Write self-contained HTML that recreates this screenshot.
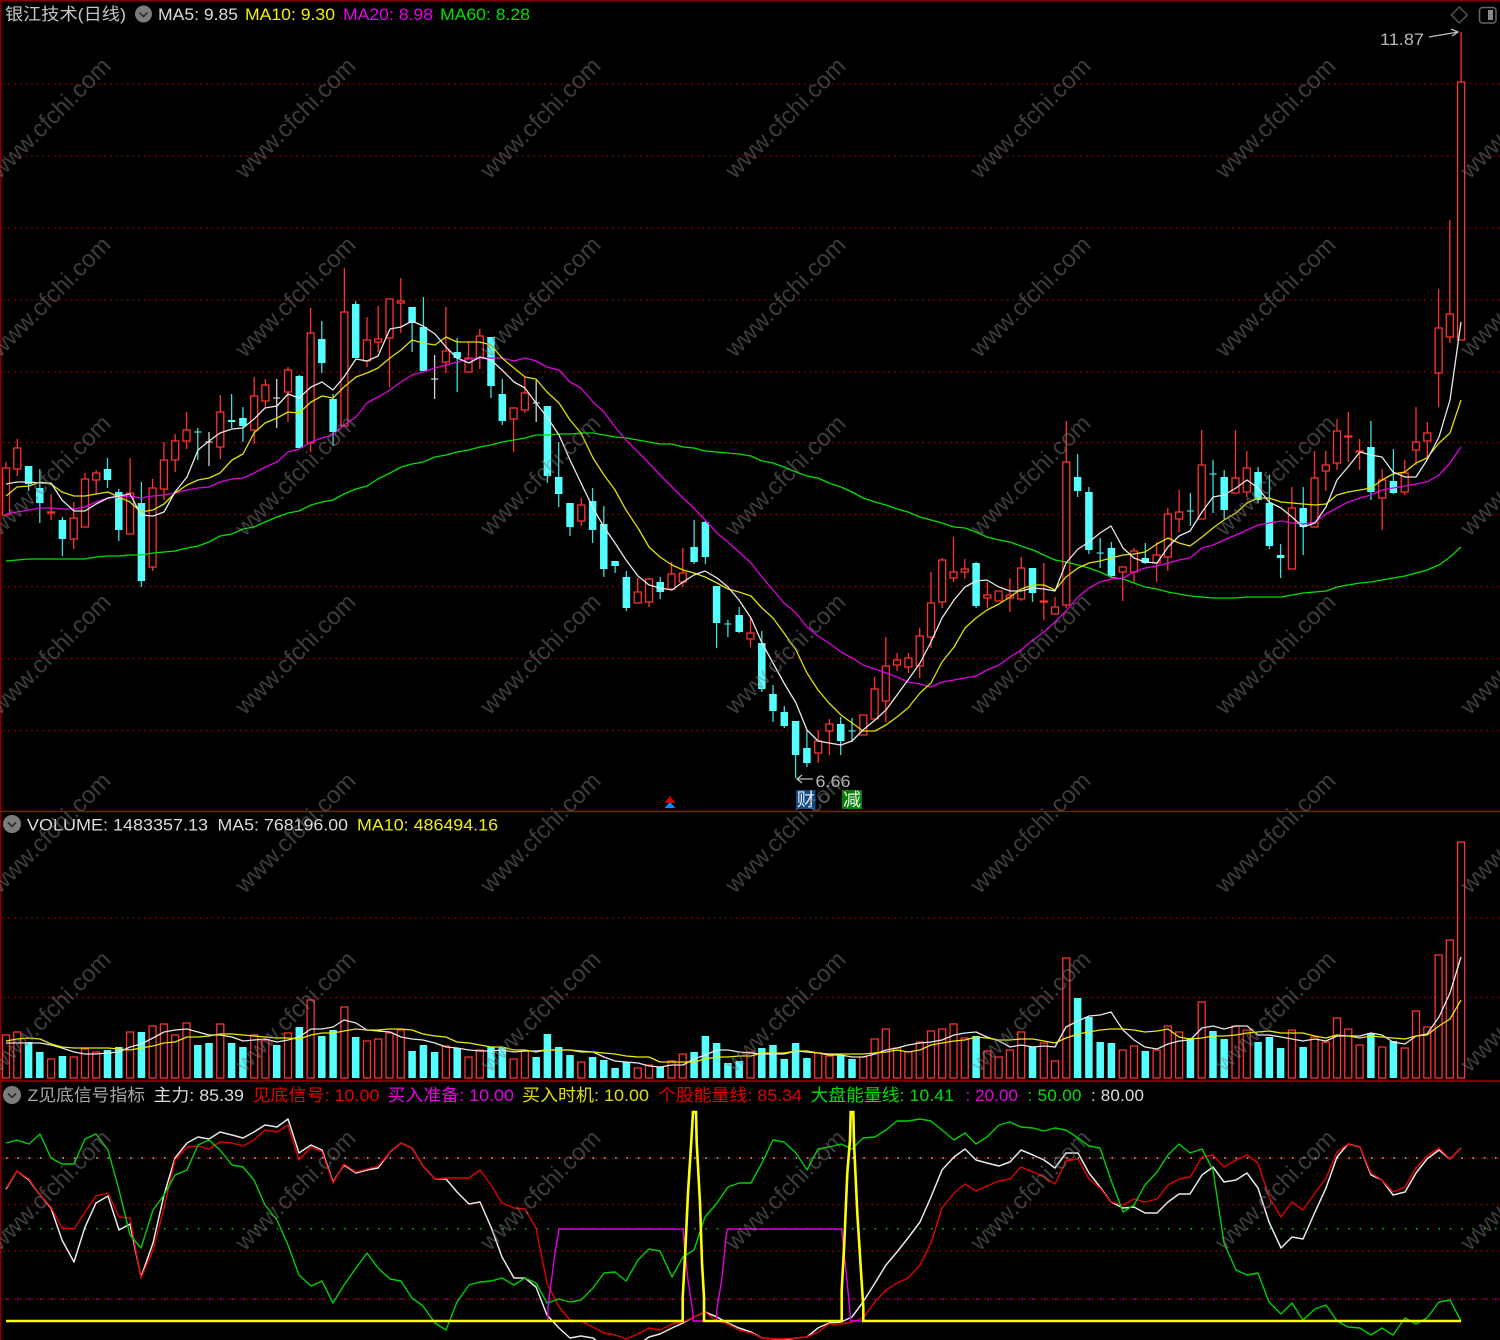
<!DOCTYPE html>
<html lang="zh"><head><meta charset="utf-8"><title>银江技术(日线)</title>
<style>
html,body{margin:0;padding:0;background:#000;width:1500px;height:1340px;overflow:hidden}
svg{display:block}
text{font-family:"Liberation Sans","Noto Sans CJK SC",sans-serif;font-size:17px}
.l{fill:none;stroke-width:1.3;stroke-linejoin:round}
.w{font-size:24px;fill:#7f7f7f;opacity:.48;text-anchor:middle}
.g{fill:none;stroke:#8c0000;stroke-width:1.5;stroke-dasharray:1.6 4.04}
</style></head><body>
<svg width="1500" height="1340" viewBox="0 0 1500 1340" xmlns="http://www.w3.org/2000/svg">
<rect width="1500" height="1340" fill="#000"/>
<!-- grid -->
<path class="g" d="M3 84H1500M3 156H1500M3 228H1500M3 300H1500M3 372H1500M3 442.5H1500M3 514.5H1500M3 586.5H1500M3 658.5H1500M3 730.5H1500M3 918H1500M3 997.5H1500M3 1158H1500M3 1204.5H1500M3 1251H1500M3 1299H1500"/>
<path d="M6 1158H1500" fill="none" stroke="#bdbdbd" stroke-width="1.5" stroke-dasharray="1.6 9.68"/>
<path d="M6 1228.7H1500" fill="none" stroke="#00c800" stroke-width="1.5" stroke-dasharray="1.6 9.68"/>
<path d="M6 1299H1500" fill="none" stroke="#c000c0" stroke-width="1.5" stroke-dasharray="1.6 9.68"/>
<!-- borders -->
<path d="M0 .7H1500M.7 0V1340" fill="none" stroke="#8a0000" stroke-width="1.5"/>
<path d="M0 811.5H1500M0 1081H1500" fill="none" stroke="#a00000" stroke-width="1.5"/>
<!-- candles -->
<path fill="none" stroke="#ff3232" stroke-width="1.3" d="M6 462V515M17.3 439V476M51.1 494V520M73.7 502V549M85 473V527M96.2 470V494M130.1 458V534M152.6 479V571M163.9 442V500M175.2 434V472M186.5 412V449M220.3 395V459M254.2 377V444M265.4 379V408M288 367V422M310.6 308V452M344.4 268V426M367 317V367M378.2 306V352M389.5 299V387M400.8 278V333M445.9 307V373M468.5 342V372M479.8 329V369M513.6 408V452M524.9 377V413M581.3 498V526M637.7 578V603M649 578V607M671.5 562V589M682.8 548V587M750.5 617V647M818.2 730V763M829.4 719V755M863.3 715V735M874.6 677V719M885.8 637V722M897.1 653V671M908.4 653V673M919.7 628V678M931 572V648M942.2 558V608M953.5 537V582M964.8 559V579M987.4 582V608M998.6 591V601M1009.9 578V612M1021.2 557V601M1043.8 563V620M1055 597V614M1066.3 421V608M1122.7 566V601M1134 548V582M1156.6 542V582M1167.8 508V571M1179.1 490V532M1201.7 430V519M1235.5 430V493M1246.8 451V497M1291.9 487V569M1314.5 451V527M1325.8 451V491M1337 419V470M1348.3 412V462M1359.6 439V470M1382.2 469V530M1404.7 460V495M1416 407V465M1427.3 422V460M1438.6 289V407M1449.8 220V343M1461.1 32V340"/>
<path fill="#000" stroke="#ff3232" stroke-width="1.3" d="M2.5 468h7v47h-7zM13.8 448h7v21h-7zM47.6 512h7v1h-7zM70.2 518h7v21h-7zM81.5 479h7v48h-7zM92.7 473h7v7h-7zM126.6 493h7v41h-7zM149.1 488h7v79h-7zM160.4 460h7v29h-7zM171.7 441h7v19h-7zM183 430h7v11h-7zM216.8 412h7v35h-7zM250.7 396h7v34h-7zM261.9 385h7v16h-7zM284.5 370h7v22h-7zM307.1 333h7v110h-7zM340.9 312h7v114h-7zM363.5 340h7v21h-7zM374.7 339h7v3h-7zM386 299h7v39h-7zM397.3 301h7v2h-7zM442.4 351h7v11h-7zM465 358h7v14h-7zM476.3 336h7v22h-7zM510.1 408h7v11h-7zM521.4 393h7v17h-7zM577.8 505h7v16h-7zM634.2 592h7v11h-7zM645.5 579h7v23h-7zM668 574h7v15h-7zM679.3 573h7v9h-7zM747 633h7v6h-7zM814.7 741h7v12h-7zM825.9 724h7v7h-7zM859.8 715h7v20h-7zM871.1 689h7v30h-7zM882.3 666h7v35h-7zM893.6 660h7v5h-7zM904.9 658h7v9h-7zM916.2 636h7v30h-7zM927.5 603h7v34h-7zM938.7 560h7v42h-7zM950 572h7v6h-7zM961.3 569h7v3h-7zM983.9 595h7v3h-7zM995.1 591h7v10h-7zM1006.4 595h7v3h-7zM1017.7 568h7v31h-7zM1040.3 601h7v1h-7zM1051.5 607h7v7h-7zM1062.8 462h7v143h-7zM1119.2 567h7v5h-7zM1130.5 551h7v21h-7zM1153.1 555h7v8h-7zM1164.3 514h7v43h-7zM1175.6 512h7v7h-7zM1198.2 465h7v54h-7zM1232 478h7v15h-7zM1243.3 468h7v24h-7zM1288.4 508h7v61h-7zM1311 478h7v49h-7zM1322.3 465h7v6h-7zM1333.5 431h7v32h-7zM1344.8 436h7v1h-7zM1356.1 451h7v1h-7zM1378.7 480h7v18h-7zM1401.2 473h7v19h-7zM1412.5 442h7v8h-7zM1423.8 433h7v8h-7zM1435.1 328h7v45h-7zM1446.3 314h7v23h-7zM1457.6 82h7v258h-7z"/>
<path fill="none" stroke="#40dcdc" stroke-width="1.3" d="M28.6 466V491M39.8 469V523M62.4 517V556M107.5 458V488M118.8 489V541M141.4 482V587M197.8 428V460M231.6 394V428M242.9 407V442M299.3 375V448M321.8 321V373M333.1 394V446M355.7 301V358M412.1 307V352M423.4 297V371M457.2 338V392M491 337V398M502.3 379V425M547.4 406V483M558.7 442V507M570 503V536M592.6 488V543M603.8 506V577M615.1 561V573M626.4 571V611M660.2 577V599M694.1 520V564M705.4 520V564M716.6 586V648M727.9 620V637M739.2 607V633M761.8 631V692M773 685V722M784.3 706V728M795.6 721V778M806.9 730V767M840.7 717V755M852 718V742M976.1 562V608M1032.5 568V602M1077.6 454V497M1088.9 487V554M1100.2 538V568M1111.4 542V578M1145.3 543V564M1190.4 493V526M1213 460V513M1224.2 470V519M1258.1 467V503M1269.4 475V549M1280.6 544V578M1303.2 487V555M1370.9 421V500M1393.4 449V494M194.3 432h7M724.4 624h7M848.5 731h7M1096.7 553h7M1186.9 511h7M1209.5 474h7"/>
<path fill="none" stroke="#54ffff" stroke-width="7.5" d="M28.6 466V484M39.8 488V503M62.4 520V539M107.5 469V480M118.8 492V530M141.4 503V581M231.6 420V422M242.9 418V426M299.3 376V448M321.8 339V363M333.1 399V432M355.7 304V358M412.1 307V323M423.4 327V371M457.2 352V358M491 337V386M502.3 394V421M547.4 406V476M558.7 477V494M570 503V527M592.6 501V530M603.8 524V569M615.1 561V566M626.4 577V608M660.2 582V592M694.1 547V562M705.4 522V557M716.6 586V623M739.2 615V632M761.8 643V689M773 694V711M784.3 712V726M795.6 721V755M806.9 748V763M840.7 724V741M976.1 563V606M1032.5 568V593M1077.6 477V491M1088.9 492V550M1111.4 548V576M1145.3 558V563M1224.2 477V510M1258.1 472V500M1269.4 503V546M1280.6 555V558M1303.2 508V527M1370.9 447V492M1393.4 481V493"/>
<path fill="none" stroke="#d0d0d0" stroke-width="1.3" d="M209 432V466M205.5 442h7M276.7 379V428M273.2 398h7M434.6 355V399M431.1 379h7M536.2 380V422M532.7 403h7"/>
<!-- price MAs -->
<polyline class="l" stroke="#00e000" points="6,561 17,560 29,559 40,559 51,559 62,559 74,559 85,559 96,557 108,556 119,556 130,555 141,555 153,553 164,552 175,551 187,548 198,546 209,542 220,536 232,534 243,529 254,527 265,522 277,517 288,513 299,511 311,505 322,502 333,500 344,494 356,489 367,486 378,479 390,473 401,467 412,464 423,462 435,457 446,455 457,452 469,450 480,447 491,445 502,442 514,440 525,438 536,435 547,435 559,434 570,434 581,433 593,433 604,435 615,437 626,438 638,440 649,442 660,444 672,444 683,447 694,448 705,451 717,452 728,453 739,454 751,456 762,461 773,463 784,467 796,472 807,476 818,478 829,483 841,487 852,492 863,498 875,502 886,505 897,509 908,512 920,517 931,520 942,523 954,527 965,528 976,532 987,537 999,540 1010,542 1021,546 1033,550 1044,555 1055,560 1066,562 1078,565 1089,568 1100,572 1111,577 1123,579 1134,583 1145,587 1157,589 1168,592 1179,594 1190,596 1202,597 1213,598 1224,598 1236,598 1247,597 1258,597 1269,597 1281,597 1292,595 1303,593 1315,592 1326,591 1337,587 1348,585 1360,583 1371,582 1382,580 1393,578 1405,576 1416,573 1427,570 1439,565 1450,557 1461,547"/>
<polyline class="l" stroke="#e000e0" points="6,514 17,512 29,510 40,508 51,508 62,509 74,509 85,507 96,502 108,498 119,497 130,496 141,498 153,496 164,495 175,493 187,490 198,488 209,487 220,482 232,479 243,478 254,473 265,467 277,462 288,452 299,449 311,442 322,438 333,435 344,425 356,417 367,403 378,397 390,390 401,382 412,375 423,372 435,368 446,365 457,362 469,359 480,358 491,358 502,358 514,361 525,358 536,361 547,367 559,370 570,382 581,388 593,402 604,412 615,427 626,440 638,452 649,463 660,475 672,487 683,498 694,508 705,520 717,533 728,542 739,552 751,563 762,577 773,590 784,603 796,613 807,627 818,636 829,643 841,652 852,658 863,665 875,669 886,673 897,677 908,682 920,684 931,687 942,682 954,680 965,678 976,676 987,670 999,665 1010,657 1021,650 1033,640 1044,632 1055,622 1066,611 1078,597 1089,588 1100,582 1111,579 1123,578 1134,572 1145,568 1157,566 1168,563 1179,560 1190,558 1202,548 1213,545 1224,540 1236,535 1247,530 1258,525 1269,523 1281,521 1292,523 1303,524 1315,522 1326,514 1337,508 1348,502 1360,498 1371,495 1382,490 1393,488 1405,486 1416,484 1427,482 1439,475 1450,463 1461,447"/>
<polyline class="l" stroke="#e0e000" points="6,496 17,487 29,486 40,482 51,484 62,492 74,496 85,496 96,494 108,492 119,497 130,502 141,512 153,510 164,504 175,493 187,485 198,480 209,478 220,473 232,460 243,454 254,433 265,423 277,418 288,412 299,413 311,402 322,396 333,398 344,387 356,377 367,373 378,368 390,358 401,350 412,340 423,343 435,345 446,337 457,342 469,342 480,342 491,345 502,358 514,368 525,377 536,379 547,392 559,403 570,420 581,433 593,458 604,475 615,490 626,510 638,528 649,547 660,557 672,565 683,570 694,573 705,577 717,583 728,589 739,592 751,596 762,608 773,618 784,633 796,650 807,673 818,690 829,703 841,715 852,723 863,731 875,731 886,725 897,717 908,708 920,693 931,683 942,662 954,647 965,628 976,618 987,610 999,604 1010,597 1021,589 1033,585 1044,585 1055,590 1066,577 1078,568 1089,563 1100,561 1111,558 1123,555 1134,554 1145,552 1157,544 1168,538 1179,543 1190,546 1202,537 1213,528 1224,520 1236,513 1247,503 1258,498 1269,498 1281,502 1292,503 1303,504 1315,505 1326,504 1337,495 1348,492 1360,490 1371,488 1382,480 1393,474 1405,472 1416,463 1427,458 1439,443 1450,433 1461,400"/>
<polyline class="l" stroke="#e8e8e8" points="6,484 17,482 29,482 40,483 51,483 62,500 74,511 85,511 96,504 108,498 119,496 130,494 141,515 153,516 164,512 175,492 187,477 198,450 209,441 220,433 232,429 243,428 254,419 265,408 277,406 288,394 299,398 311,387 322,382 333,390 344,377 356,359 367,361 378,356 390,329 401,327 412,321 423,326 435,334 446,347 457,358 469,363 480,357 491,360 502,370 514,382 525,388 536,403 547,417 559,435 570,460 581,483 593,508 604,527 615,543 626,560 638,576 649,585 660,588 672,590 683,582 694,575 705,571 717,578 728,587 739,600 751,618 762,643 773,663 784,683 796,703 807,730 818,741 829,743 841,745 852,741 863,730 875,720 886,710 897,695 908,680 920,663 931,642 942,618 954,600 965,587 976,581 987,580 999,587 1010,591 1021,591 1033,588 1044,589 1055,591 1066,563 1078,549 1089,542 1100,533 1111,526 1123,548 1134,558 1145,562 1157,563 1168,547 1179,536 1190,531 1202,512 1213,497 1224,495 1236,488 1247,480 1258,488 1269,502 1281,508 1292,517 1303,527 1315,523 1326,507 1337,480 1348,467 1360,452 1371,455 1382,457 1393,472 1405,477 1416,477 1427,460 1439,437 1450,400 1461,322"/>
<!-- volume -->
<path fill="none" stroke="#ff3232" stroke-width="1.3" d="M2.5 1035h7V1078h-7zM13.8 1032h7V1078h-7zM47.6 1059h7V1078h-7zM70.2 1057h7V1078h-7zM81.5 1049h7V1078h-7zM92.7 1052h7V1078h-7zM126.6 1032h7V1078h-7zM149.1 1026h7V1078h-7zM160.4 1024h7V1078h-7zM171.7 1035h7V1078h-7zM183 1023h7V1078h-7zM216.8 1024h7V1078h-7zM250.7 1035h7V1078h-7zM261.9 1040h7V1078h-7zM284.5 1033h7V1078h-7zM307.1 1000h7V1078h-7zM340.9 1007h7V1078h-7zM363.5 1041h7V1078h-7zM374.7 1039h7V1078h-7zM386 1033h7V1078h-7zM397.3 1030h7V1078h-7zM442.4 1046h7V1078h-7zM465 1057h7V1078h-7zM476.3 1050h7V1078h-7zM510.1 1059h7V1078h-7zM521.4 1051h7V1078h-7zM577.8 1062h7V1078h-7zM634.2 1068h7V1078h-7zM645.5 1065h7V1078h-7zM668 1061h7V1078h-7zM679.3 1054h7V1078h-7zM747 1052h7V1078h-7zM814.7 1053h7V1078h-7zM825.9 1056h7V1078h-7zM859.8 1057h7V1078h-7zM871.1 1039h7V1078h-7zM882.3 1029h7V1078h-7zM893.6 1048h7V1078h-7zM904.9 1052h7V1078h-7zM916.2 1042h7V1078h-7zM927.5 1031h7V1078h-7zM938.7 1029h7V1078h-7zM950 1024h7V1078h-7zM961.3 1038h7V1078h-7zM983.9 1051h7V1078h-7zM995.1 1057h7V1078h-7zM1006.4 1050h7V1078h-7zM1017.7 1032h7V1078h-7zM1040.3 1043h7V1078h-7zM1051.5 1061h7V1078h-7zM1062.8 958h7V1078h-7zM1119.2 1050h7V1078h-7zM1130.5 1046h7V1078h-7zM1153.1 1050h7V1078h-7zM1164.3 1026h7V1078h-7zM1175.6 1032h7V1078h-7zM1198.2 1002h7V1078h-7zM1232 1026h7V1078h-7zM1243.3 1030h7V1078h-7zM1288.4 1030h7V1078h-7zM1311 1037h7V1078h-7zM1322.3 1042h7V1078h-7zM1333.5 1018h7V1078h-7zM1344.8 1029h7V1078h-7zM1356.1 1045h7V1078h-7zM1378.7 1047h7V1078h-7zM1401.2 1048h7V1078h-7zM1412.5 1011h7V1078h-7zM1423.8 1027h7V1078h-7zM1435.1 955h7V1078h-7zM1446.3 940h7V1078h-7zM1457.6 842h7V1078h-7z"/>
<path fill="none" stroke="#54ffff" stroke-width="7.5" d="M28.6 1042V1078M39.8 1052V1078M62.4 1056V1078M107.5 1050V1078M118.8 1047V1078M141.4 1032V1078M197.8 1045V1078M209 1043V1078M231.6 1043V1078M242.9 1047V1078M276.7 1045V1078M299.3 1027V1078M321.8 1036V1078M333.1 1030V1078M355.7 1037V1078M412.1 1051V1078M423.4 1045V1078M434.6 1052V1078M457.2 1048V1078M491 1047V1078M502.3 1047V1078M536.2 1057V1078M547.4 1034V1078M558.7 1047V1078M570 1055V1078M592.6 1057V1078M603.8 1060V1078M615.1 1068V1078M626.4 1062V1078M660.2 1067V1078M694.1 1052V1078M705.4 1036V1078M716.6 1043V1078M727.9 1063V1078M739.2 1061V1078M761.8 1048V1078M773 1045V1078M784.3 1059V1078M795.6 1043V1078M806.9 1058V1078M840.7 1055V1078M852 1059V1078M976.1 1036V1078M1032.5 1047V1078M1077.6 998V1078M1088.9 1017V1078M1100.2 1042V1078M1111.4 1043V1078M1145.3 1051V1078M1190.4 1038V1078M1213 1031V1078M1224.2 1039V1078M1258.1 1042V1078M1269.4 1037V1078M1280.6 1048V1078M1303.2 1047V1078M1370.9 1033V1078M1393.4 1041V1078"/>
<polyline class="l" stroke="#e8e8e8" points="6,1043 17,1043 29,1043 40,1043 51,1045 62,1048 74,1052 85,1054 96,1054 108,1053 119,1052 130,1047 141,1044 153,1038 164,1032 175,1030 187,1029 198,1032 209,1035 220,1035 232,1037 243,1041 254,1040 265,1039 277,1042 288,1040 299,1037 311,1029 322,1029 333,1027 344,1020 356,1023 367,1030 378,1031 390,1032 401,1037 412,1039 423,1040 435,1043 446,1047 457,1048 469,1050 480,1051 491,1051 502,1050 514,1052 525,1051 536,1051 547,1050 559,1050 570,1050 581,1051 593,1052 604,1057 615,1061 626,1062 638,1063 649,1066 660,1067 672,1065 683,1065 694,1059 705,1055 717,1050 728,1050 739,1052 751,1053 762,1054 773,1054 784,1054 796,1051 807,1052 818,1053 829,1055 841,1055 852,1057 863,1057 875,1054 886,1050 897,1048 908,1045 920,1043 931,1042 942,1040 954,1035 965,1033 976,1032 987,1037 999,1041 1010,1047 1021,1045 1033,1047 1044,1046 1055,1047 1066,1027 1078,1021 1089,1016 1100,1015 1111,1012 1123,1030 1134,1040 1145,1047 1157,1049 1168,1044 1179,1041 1190,1040 1202,1028 1213,1026 1224,1029 1236,1026 1247,1026 1258,1035 1269,1035 1281,1037 1292,1039 1303,1041 1315,1039 1326,1041 1337,1036 1348,1036 1360,1036 1371,1033 1382,1035 1393,1042 1405,1044 1416,1036 1427,1034 1439,1017 1450,993 1461,957"/>
<polyline class="l" stroke="#eaea00" points="6,1041 17,1039 29,1038 40,1039 51,1044 62,1047 74,1048 85,1048 96,1048 108,1048 119,1049 130,1050 141,1048 153,1046 164,1043 175,1042 187,1037 198,1037 209,1036 220,1034 232,1034 243,1035 254,1036 265,1037 277,1038 288,1038 299,1039 311,1035 322,1033 333,1033 344,1031 356,1029 367,1030 378,1030 390,1029 401,1029 412,1030 423,1034 435,1036 446,1037 457,1042 469,1043 480,1045 491,1047 502,1047 514,1050 525,1050 536,1052 547,1050 559,1050 570,1050 581,1052 593,1052 604,1053 615,1054 626,1056 638,1057 649,1057 660,1062 672,1062 683,1062 694,1062 705,1059 717,1057 728,1057 739,1056 751,1056 762,1053 773,1053 784,1053 796,1051 807,1051 818,1053 829,1054 841,1054 852,1054 863,1054 875,1053 886,1052 897,1050 908,1052 920,1050 931,1045 942,1043 954,1041 965,1040 976,1037 987,1038 999,1040 1010,1040 1021,1039 1033,1039 1044,1041 1055,1043 1066,1038 1078,1034 1089,1032 1100,1030 1111,1029 1123,1029 1134,1030 1145,1032 1157,1031 1168,1029 1179,1037 1190,1039 1202,1038 1213,1036 1224,1036 1236,1035 1247,1033 1258,1032 1269,1031 1281,1033 1292,1033 1303,1033 1315,1036 1326,1038 1337,1035 1348,1036 1360,1038 1371,1036 1382,1037 1393,1038 1405,1039 1416,1036 1427,1035 1439,1026 1450,1019 1461,1000"/>
<!-- indicator -->
<polyline fill="none" stroke="#e8e8e8" stroke-width="1.5" stroke-linejoin="round" points="6,1189 17,1171 29,1180 40,1195 51,1208 62,1240 74,1262 85,1227 96,1203 108,1196 119,1230 130,1224 141,1277 153,1243 164,1195 175,1158 187,1143 198,1137 209,1139 220,1132 232,1135 243,1138 254,1132 265,1125 277,1127 288,1119 299,1153 311,1145 322,1150 333,1182 344,1165 356,1173 367,1170 378,1168 390,1152 401,1143 412,1148 423,1166 435,1179 446,1179 457,1192 469,1204 480,1202 491,1227 502,1257 514,1278 525,1278 536,1287 547,1315 559,1328 570,1338 581,1336 593,1338 604,1347 615,1347 626,1347 638,1345 649,1337 660,1334 672,1328 683,1323 694,1317 705,1312 717,1317 728,1323 739,1328 751,1332 762,1338 773,1339 784,1340 796,1338 807,1337 818,1328 829,1323 841,1322 852,1317 863,1302 875,1283 886,1265 897,1252 908,1238 920,1222 931,1197 942,1170 954,1157 965,1149 976,1160 987,1163 999,1166 1010,1162 1021,1150 1033,1155 1044,1160 1055,1168 1066,1153 1078,1153 1089,1173 1100,1187 1111,1202 1123,1208 1134,1207 1145,1213 1157,1213 1168,1202 1179,1194 1190,1194 1202,1175 1213,1167 1224,1182 1236,1180 1247,1173 1258,1188 1269,1222 1281,1248 1292,1237 1303,1239 1315,1212 1326,1188 1337,1157 1348,1144 1360,1147 1371,1175 1382,1180 1393,1195 1405,1192 1416,1173 1427,1159 1439,1150 1450,1159 1461,1148"/>
<polyline fill="none" stroke="#e00000" stroke-width="1.4" stroke-linejoin="round" points="6,1188 17,1171 29,1179 40,1195 51,1207 62,1228 74,1229 85,1212 96,1196 108,1193 119,1217 130,1218 141,1278 153,1250 164,1208 175,1160 187,1147 198,1146 209,1149 220,1142 232,1143 243,1146 254,1140 265,1130 277,1132 288,1125 299,1160 311,1147 322,1152 333,1183 344,1164 356,1172 367,1169 378,1166 390,1152 401,1143 412,1148 423,1166 435,1179 446,1178 457,1178 469,1178 480,1170 491,1185 502,1203 514,1208 525,1209 536,1228 547,1283 559,1307 570,1320 581,1321 593,1327 604,1333 615,1335 626,1339 638,1334 649,1328 660,1330 672,1324 683,1322 694,1317 705,1312 717,1321 728,1324 739,1330 751,1333 762,1338 773,1339 784,1339 796,1338 807,1337 818,1332 829,1324 841,1324 852,1322 863,1318 875,1302 886,1290 897,1283 908,1278 920,1265 931,1243 942,1208 954,1193 965,1184 976,1191 987,1186 999,1181 1010,1179 1021,1167 1033,1172 1044,1177 1055,1184 1066,1161 1078,1159 1089,1179 1100,1188 1111,1202 1123,1205 1134,1199 1145,1202 1157,1199 1168,1185 1179,1179 1190,1177 1202,1157 1213,1155 1224,1167 1236,1160 1247,1155 1258,1163 1269,1197 1281,1217 1292,1202 1303,1210 1315,1193 1326,1178 1337,1152 1348,1144 1360,1147 1371,1173 1382,1180 1393,1192 1405,1187 1416,1168 1427,1156 1439,1148 1450,1159 1461,1148"/>
<polyline fill="none" stroke="#00d000" stroke-width="1.4" stroke-linejoin="round" points="6,1143 17,1140 29,1144 40,1134 51,1158 62,1164 74,1164 85,1139 96,1134 108,1150 119,1190 130,1235 141,1248 153,1210 164,1195 175,1175 187,1170 198,1145 209,1140 220,1150 232,1165 243,1167 254,1180 265,1205 277,1220 288,1245 299,1275 311,1286 322,1281 333,1303 344,1285 356,1268 367,1253 378,1268 390,1279 401,1281 412,1298 423,1306 435,1323 446,1330 457,1302 469,1285 480,1282 491,1281 502,1278 514,1285 525,1278 536,1283 547,1303 559,1299 570,1302 581,1300 593,1288 604,1273 615,1272 626,1281 638,1260 649,1249 660,1251 672,1277 683,1257 694,1250 705,1217 717,1203 728,1187 739,1183 751,1183 762,1163 773,1140 784,1142 796,1153 807,1170 818,1149 829,1147 841,1144 852,1149 863,1138 875,1137 886,1130 897,1121 908,1121 920,1119 931,1121 942,1130 954,1140 965,1133 976,1144 987,1137 999,1125 1010,1122 1021,1127 1033,1128 1044,1131 1055,1128 1066,1130 1078,1138 1089,1146 1100,1148 1111,1180 1123,1212 1134,1205 1145,1185 1157,1172 1168,1155 1179,1144 1190,1153 1202,1149 1213,1170 1224,1243 1236,1270 1247,1275 1258,1273 1269,1302 1281,1314 1292,1303 1303,1320 1315,1309 1326,1305 1337,1321 1348,1327 1360,1328 1371,1335 1382,1328 1393,1335 1405,1318 1416,1324 1427,1318 1439,1302 1450,1300 1461,1321"/>
<path fill="none" stroke="#e000e0" stroke-width="1.4" d="M548 1321V1307L555 1253L559 1229H683L685 1253L688 1280L693 1313V1321H705M716.7 1321V1310L721.7 1280L726 1237L727.3 1229H841.7L843.3 1247L846.7 1277L850 1313L850.7 1321H862"/>
<path fill="none" stroke="#ffff00" stroke-width="2.6" stroke-linejoin="miter" d="M6 1321H682.7V1297L685 1257L688 1193L691.5 1138L693 1112H696L696.7 1143L700 1203L702 1263L704 1297V1321H841.7V1290L844.3 1243L847.3 1173L850 1140L850.7 1112H853.3L854 1143L857.3 1213L860.7 1267L863.3 1307V1321H1461"/>
<!-- markers -->
<path d="M670 796L675.5 803H664.5Z" fill="#d00000"/>
<path d="M670 802L675.5 808H664.5Z" fill="#0a8cf0"/>
<rect x="796" y="790" width="19.5" height="19" fill="#134a80"/>
<rect x="842" y="790" width="20" height="19" fill="#0a7d0a"/>
<circle cx="824" cy="798" r="4.2" fill="none" stroke="#555" stroke-width="1.2"/>
<text x="805.8" y="806" text-anchor="middle" style="font-size:18px" fill="#e6eef6">财</text>
<text x="852" y="806" text-anchor="middle" style="font-size:18px" fill="#e6f6e6">减</text>
<path d="M813 779H797M802 775L797 779L802 783" fill="none" stroke="#bdbdbd" stroke-width="1.3"/>
<text x="815.5" y="787" textLength="35" lengthAdjust="spacingAndGlyphs" fill="#b8b8b8">6.66</text>
<path d="M1429 37L1458 32M1451 29L1458 32L1452 36" fill="none" stroke="#bdbdbd" stroke-width="1.3"/>
<text x="1380" y="45" textLength="44" lengthAdjust="spacingAndGlyphs" fill="#b8b8b8">11.87</text>
<!-- header -->
<text x="5" y="20" textLength="121" lengthAdjust="spacingAndGlyphs" fill="#c4c4c4">银江技术(日线)</text>
<circle cx="143.5" cy="14" r="8.5" fill="#7c7c7c"/><path d="M139.5 12.5L143.5 16.5L147.5 12.5" fill="none" stroke="#2c2c2c" stroke-width="1.6"/>
<text x="158" y="20" textLength="80" lengthAdjust="spacingAndGlyphs" fill="#dcdcdc">MA5: 9.85</text>
<text x="245" y="20" textLength="90" lengthAdjust="spacingAndGlyphs" fill="#f0f000">MA10: 9.30</text>
<text x="343" y="20" textLength="90" lengthAdjust="spacingAndGlyphs" fill="#e800e8">MA20: 8.98</text>
<text x="440" y="20" textLength="90" lengthAdjust="spacingAndGlyphs" fill="#00e000">MA60: 8.28</text>
<path d="M1459.3 7L1467.3 15L1459.3 23L1451.3 15Z" fill="none" stroke="#5a5a5a" stroke-width="1.3"/>
<rect x="1479.5" y="7.5" width="16.5" height="15.5" rx="3" fill="none" stroke="#666" stroke-width="1.5"/>
<rect x="1488" y="10" width="5" height="10" fill="#8a8a8a"/>
<circle cx="12" cy="824" r="9" fill="#7c7c7c"/><path d="M8 822.5L12 826.5L16 822.5" fill="none" stroke="#2c2c2c" stroke-width="1.6"/>
<text x="27" y="830.5" textLength="181" lengthAdjust="spacingAndGlyphs" fill="#dcdcdc">VOLUME: 1483357.13</text>
<text x="217.5" y="830.5" textLength="130.5" lengthAdjust="spacingAndGlyphs" fill="#dcdcdc">MA5: 768196.00</text>
<text x="357" y="830.5" textLength="141" lengthAdjust="spacingAndGlyphs" fill="#f0f000">MA10: 486494.16</text>
<circle cx="12" cy="1095" r="9" fill="#7c7c7c"/><path d="M8 1093.5L12 1097.5L16 1093.5" fill="none" stroke="#2c2c2c" stroke-width="1.6"/>
<text x="27.5" y="1101" textLength="117.5" lengthAdjust="spacingAndGlyphs" fill="#a8a8a8">Z见底信号指标</text>
<text x="153.5" y="1101" textLength="90.5" lengthAdjust="spacingAndGlyphs" fill="#dcdcdc">主力: 85.39</text>
<text x="252.5" y="1101" textLength="127" lengthAdjust="spacingAndGlyphs" fill="#e80000">见底信号: 10.00</text>
<text x="387.5" y="1101" textLength="126.5" lengthAdjust="spacingAndGlyphs" fill="#e800e8">买入准备: 10.00</text>
<text x="522" y="1101" textLength="127" lengthAdjust="spacingAndGlyphs" fill="#e0e000">买入时机: 10.00</text>
<text x="658" y="1101" textLength="144" lengthAdjust="spacingAndGlyphs" fill="#e80000">个股能量线: 85.34</text>
<text x="810.5" y="1101" textLength="143.5" lengthAdjust="spacingAndGlyphs" fill="#00e000">大盘能量线: 10.41</text>
<text x="965.5" y="1101" textLength="52.5" lengthAdjust="spacing" fill="#e800e8">: 20.00</text>
<text x="1027.5" y="1101" textLength="54" lengthAdjust="spacing" fill="#00e000">: 50.00</text>
<text x="1091" y="1101" textLength="53" lengthAdjust="spacing" fill="#dcdcdc">: 80.00</text>
<!-- watermark -->
<g transform="translate(5 5)">
<text class="w" transform="rotate(-45 51 118.6)" x="51" y="118.6">www.cfchi.com</text><text class="w" transform="rotate(-45 296 118.6)" x="296" y="118.6">www.cfchi.com</text><text class="w" transform="rotate(-45 541 118.6)" x="541" y="118.6">www.cfchi.com</text><text class="w" transform="rotate(-45 786 118.6)" x="786" y="118.6">www.cfchi.com</text><text class="w" transform="rotate(-45 1031 118.6)" x="1031" y="118.6">www.cfchi.com</text><text class="w" transform="rotate(-45 1276 118.6)" x="1276" y="118.6">www.cfchi.com</text><text class="w" transform="rotate(-45 1521 118.6)" x="1521" y="118.6">www.cfchi.com</text>
<text class="w" transform="rotate(-45 51 297.3)" x="51" y="297.3">www.cfchi.com</text><text class="w" transform="rotate(-45 296 297.3)" x="296" y="297.3">www.cfchi.com</text><text class="w" transform="rotate(-45 541 297.3)" x="541" y="297.3">www.cfchi.com</text><text class="w" transform="rotate(-45 786 297.3)" x="786" y="297.3">www.cfchi.com</text><text class="w" transform="rotate(-45 1031 297.3)" x="1031" y="297.3">www.cfchi.com</text><text class="w" transform="rotate(-45 1276 297.3)" x="1276" y="297.3">www.cfchi.com</text><text class="w" transform="rotate(-45 1521 297.3)" x="1521" y="297.3">www.cfchi.com</text>
<text class="w" transform="rotate(-45 51 476)" x="51" y="476">www.cfchi.com</text><text class="w" transform="rotate(-45 296 476)" x="296" y="476">www.cfchi.com</text><text class="w" transform="rotate(-45 541 476)" x="541" y="476">www.cfchi.com</text><text class="w" transform="rotate(-45 786 476)" x="786" y="476">www.cfchi.com</text><text class="w" transform="rotate(-45 1031 476)" x="1031" y="476">www.cfchi.com</text><text class="w" transform="rotate(-45 1276 476)" x="1276" y="476">www.cfchi.com</text><text class="w" transform="rotate(-45 1521 476)" x="1521" y="476">www.cfchi.com</text>
<text class="w" transform="rotate(-45 51 654.6)" x="51" y="654.6">www.cfchi.com</text><text class="w" transform="rotate(-45 296 654.6)" x="296" y="654.6">www.cfchi.com</text><text class="w" transform="rotate(-45 541 654.6)" x="541" y="654.6">www.cfchi.com</text><text class="w" transform="rotate(-45 786 654.6)" x="786" y="654.6">www.cfchi.com</text><text class="w" transform="rotate(-45 1031 654.6)" x="1031" y="654.6">www.cfchi.com</text><text class="w" transform="rotate(-45 1276 654.6)" x="1276" y="654.6">www.cfchi.com</text><text class="w" transform="rotate(-45 1521 654.6)" x="1521" y="654.6">www.cfchi.com</text>
<text class="w" transform="rotate(-45 51 833.3)" x="51" y="833.3">www.cfchi.com</text><text class="w" transform="rotate(-45 296 833.3)" x="296" y="833.3">www.cfchi.com</text><text class="w" transform="rotate(-45 541 833.3)" x="541" y="833.3">www.cfchi.com</text><text class="w" transform="rotate(-45 786 833.3)" x="786" y="833.3">www.cfchi.com</text><text class="w" transform="rotate(-45 1031 833.3)" x="1031" y="833.3">www.cfchi.com</text><text class="w" transform="rotate(-45 1276 833.3)" x="1276" y="833.3">www.cfchi.com</text><text class="w" transform="rotate(-45 1521 833.3)" x="1521" y="833.3">www.cfchi.com</text>
<text class="w" transform="rotate(-45 51 1012)" x="51" y="1012">www.cfchi.com</text><text class="w" transform="rotate(-45 296 1012)" x="296" y="1012">www.cfchi.com</text><text class="w" transform="rotate(-45 541 1012)" x="541" y="1012">www.cfchi.com</text><text class="w" transform="rotate(-45 786 1012)" x="786" y="1012">www.cfchi.com</text><text class="w" transform="rotate(-45 1031 1012)" x="1031" y="1012">www.cfchi.com</text><text class="w" transform="rotate(-45 1276 1012)" x="1276" y="1012">www.cfchi.com</text><text class="w" transform="rotate(-45 1521 1012)" x="1521" y="1012">www.cfchi.com</text>
<text class="w" transform="rotate(-45 51 1190.7)" x="51" y="1190.7">www.cfchi.com</text><text class="w" transform="rotate(-45 296 1190.7)" x="296" y="1190.7">www.cfchi.com</text><text class="w" transform="rotate(-45 541 1190.7)" x="541" y="1190.7">www.cfchi.com</text><text class="w" transform="rotate(-45 786 1190.7)" x="786" y="1190.7">www.cfchi.com</text><text class="w" transform="rotate(-45 1031 1190.7)" x="1031" y="1190.7">www.cfchi.com</text><text class="w" transform="rotate(-45 1276 1190.7)" x="1276" y="1190.7">www.cfchi.com</text><text class="w" transform="rotate(-45 1521 1190.7)" x="1521" y="1190.7">www.cfchi.com</text>
</g>
</svg>
</body></html>
